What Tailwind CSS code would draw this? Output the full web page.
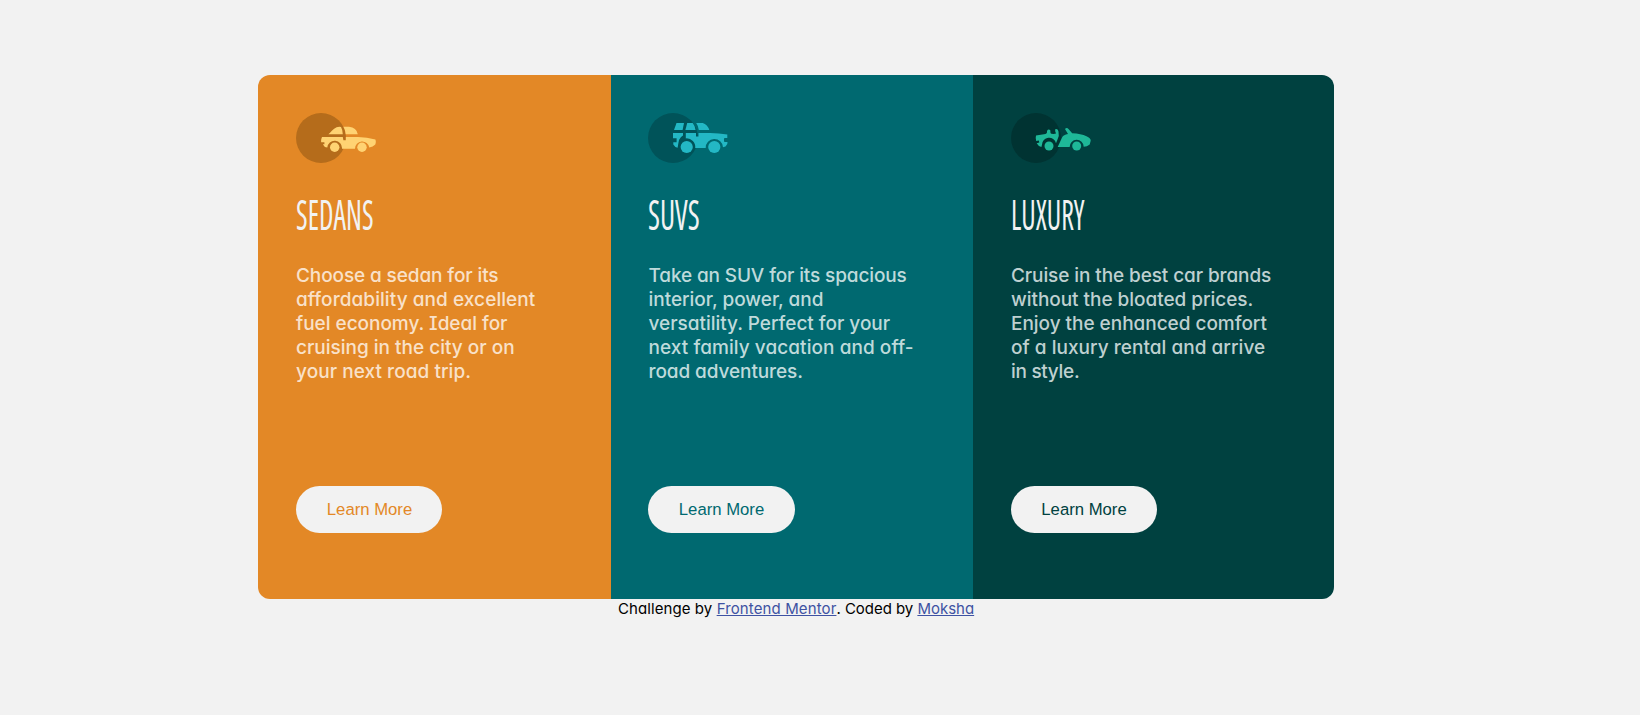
<!DOCTYPE html>
<html lang="en">
<head>
<meta charset="utf-8">
<title>3-column preview card</title>
<script src="https://cdn.jsdelivr.net/npm/@tailwindcss/browser@4"></script>
</head>
<body class="min-h-screen bg-[#f2f2f2] pt-[75px] font-['Inter',sans-serif] [font-feature-settings:'cv11','cv08']">
<main class="ml-[258px] flex h-[524px] w-[1076px] overflow-hidden rounded-[12px] text-[19px] leading-6 font-medium whitespace-nowrap">
  <section class="flex w-[353px] flex-col items-start bg-[#e38826] pt-[38px] pl-[38px]">
    <svg class="block h-[50px] w-20" viewBox="0 0 80 50">
      <circle cx="25" cy="25" r="25" fill="#b56c1b"/>
      <g fill="#ffd373">
        <path d="M32.4 21.2C35 19 37 16 40.6 14.3Q43 13.5 45 14Q46.6 16.5 46.8 21.2Z"/>
        <path d="M47.4 13.8H53Q60.5 14.5 61.8 21.2H49.7Q49.5 17 47.4 13.8Z"/>
        <path d="M26 24H46.8L47.4 27.2H49.8V24H62Q71 24.3 79.4 26.4Q80.3 29 79.3 31.6Q77 34 73.3 34.6A7.2 7.2 0 0 0 59 35.7H46A7.3 7.3 0 1 0 31.3 34.6Q28 34 26.8 31.2H28.4V29.2H25.2Q24.8 26.5 26 24Z"/>
        <circle cx="38.7" cy="34.3" r="4.7"/><circle cx="66" cy="34.3" r="4.7"/>
      </g>
    </svg>
    <h1 class="mt-[27px] h-12 origin-left scale-x-[0.675] font-['Open_Sans',sans-serif] text-[42px] leading-[48px] font-medium font-stretch-condensed text-[#f2f2f2]">SEDANS</h1>
    <p class="mt-[26px] text-[#f9e1c9]">
      <span class="block tracking-[-0.11px]">Choose a sedan for its</span>
      <span class="block tracking-[0.07px]">affordability and excellent</span>
      <span class="block tracking-[-0.03px]">fuel economy. Ideal for</span>
      <span class="block tracking-[0px]">cruising in the city or on</span>
      <span class="block tracking-[0.06px]">your next road trip.</span>
    </p>
    <button class="mt-[102px] h-[47px] w-[146px] rounded-full bg-[#f2f2f2] pl-px font-['Liberation_Sans',sans-serif] text-[16.7px] font-normal text-[#e38826]">Learn More</button>
  </section>
  <section class="flex w-[362px] flex-col items-start bg-[#006970] pt-[38px] pl-[37px]">
    <svg class="block h-[50px] w-20" viewBox="0 0 80 50">
      <circle cx="25" cy="25" r="25" fill="#005359"/>
      <g fill="#23b8c5">
        <path d="M28.5 10H36L34.6 17H26Z"/>
        <path d="M39.2 10H44.7Q47.2 13 47.6 17H37.4Z"/>
        <path d="M48.2 10H54.7Q59.5 11.5 61.3 17H50.8Q50.4 13 48.2 10Z"/>
        <path d="M25 20H35V22.6Q33 23.6 31 27Q30 32 29.6 34.7Q27 34.5 25.3 31.5V29.3H28.6V25.2H25Z"/>
        <path d="M37.8 20H48V23.5H50.5V20H62Q71 20.2 79.3 21.4V25H76.3Q75.5 27 76.3 29H79.5Q80 31.5 77.5 33.4L75 34.3A8.6 8.6 0 0 0 57.7 35H47.2A8.6 8.6 0 0 0 37.8 25.4Z"/>
        <circle cx="38.7" cy="34" r="6.1"/><circle cx="66.3" cy="34" r="6.1"/>
      </g>
    </svg>
    <h1 class="mt-[27px] h-12 origin-left scale-x-[0.695] font-['Open_Sans',sans-serif] text-[42px] leading-[48px] font-medium font-stretch-condensed text-[#f2f2f2]">SUVS</h1>
    <p class="mt-[26px] pl-[0.5px] text-[#bfdadb]">
      <span class="block tracking-[-0.13px]">Take an SUV for its spacious</span>
      <span class="block tracking-[-0.03px]">interior, power, and</span>
      <span class="block tracking-[-0.02px]">versatility. Perfect for your</span>
      <span class="block tracking-[0.06px]">next family vacation and off-</span>
      <span class="block tracking-[-0.09px]">road adventures.</span>
    </p>
    <button class="mt-[102px] h-[47px] w-[147px] rounded-full bg-[#f2f2f2] font-['Liberation_Sans',sans-serif] text-[16.7px] font-normal text-[#006970]">Learn More</button>
  </section>
  <section class="flex w-[361px] flex-col items-start bg-[#004140] pt-[38px] pl-[38px]">
    <svg class="block h-[50px] w-20" viewBox="0 0 80 50">
      <circle cx="25" cy="25" r="25" fill="#003332"/>
      <g fill="#1eb898">
        <path d="M25 22.5L34.5 20.9Q36.5 20.5 36 18Q37.5 15.5 39.4 17.5Q39.2 20.7 40.5 20.8Q43.5 21.2 45 20.5Q43.8 18 44.2 16.3Q46.7 15.4 47.5 18.5Q48.5 23 46.6 26.3L45 30.2A7.1 7.1 0 0 0 31 31.8L30.4 34Q27 33 25.7 30.3L28.3 29.6L27.8 27.4L25.2 28Q24.3 25 25 22.5Z"/>
        <path d="M54 16Q55.8 13.8 57.5 16L61.2 20.2Q70 20.5 75.5 23.2Q80.6 25.3 79.5 28.5L78.7 31.5Q76 33.7 72.7 33.7A7 7 0 0 0 58.7 34H46.7L51.3 24Q52.5 21.8 57 20.9Q55 17.8 54 16Z"/>
        <circle cx="38" cy="33" r="4.5"/><circle cx="65.7" cy="33" r="4.5"/>
      </g>
    </svg>
    <h1 class="mt-[27px] h-12 origin-left scale-x-[0.665] font-['Open_Sans',sans-serif] text-[42px] leading-[48px] font-medium font-stretch-condensed text-[#f2f2f2]">LUXURY</h1>
    <p class="mt-[26px] text-[#bfd0d0]">
      <span class="block tracking-[-0.1px]">Cruise in the best car brands</span>
      <span class="block tracking-[-0.04px]">without the bloated prices.</span>
      <span class="block tracking-[-0.03px]">Enjoy the enhanced comfort</span>
      <span class="block tracking-[0.03px]">of a luxury rental and arrive</span>
      <span class="block tracking-[-0.3px]">in style.</span>
    </p>
    <button class="mt-[102px] h-[47px] w-[146px] rounded-full bg-[#f2f2f2] font-['Liberation_Sans',sans-serif] text-[16.7px] font-normal text-[#004140]">Learn More</button>
  </section>
</main>
<footer class="ml-[618px] text-[15px] leading-[19px] whitespace-pre text-black"><span class="tracking-[0.08px]">Challenge by </span><a class="tracking-[0.12px] text-[#3e52a3] underline" href="#">Frontend Mentor</a><span class="tracking-[-0.04px]">. Coded by </span><a class="text-[#3e52a3] underline" href="#">Moksha</a></footer>
</body>
</html>
